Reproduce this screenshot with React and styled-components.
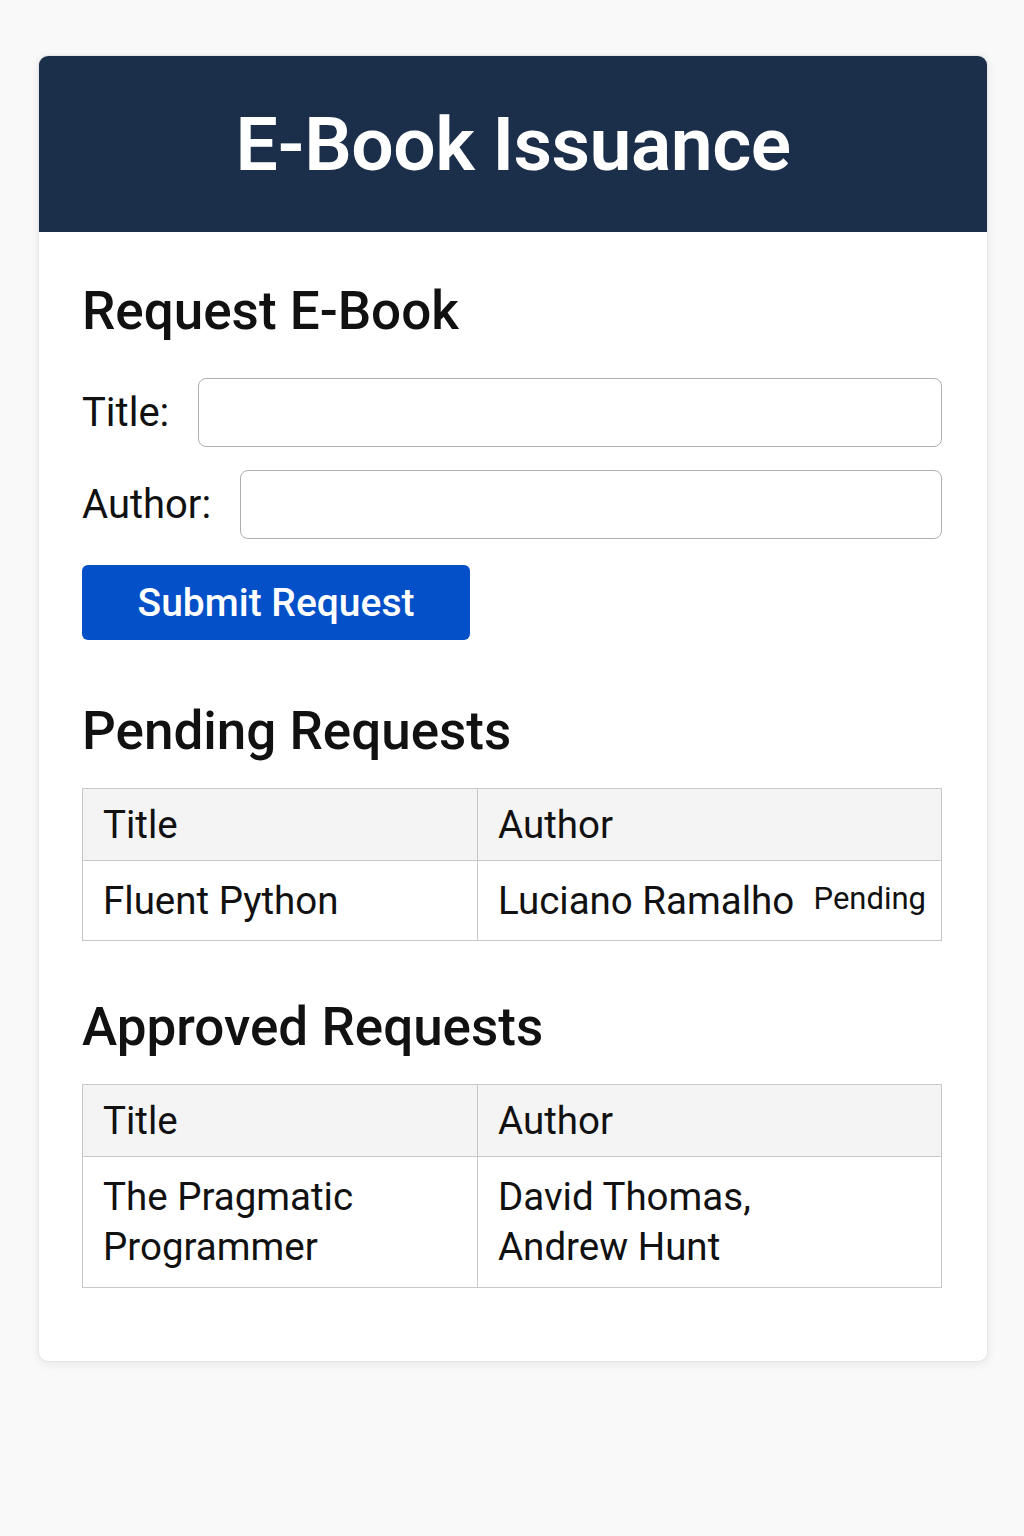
import React from 'react'
import styled, { createGlobalStyle } from 'styled-components'

const GlobalStyle = createGlobalStyle`
    html, body {
        margin: 0;
        padding: 0;
        background: #f9f9f9;
    }
    body {
        font-family: Roboto, "Liberation Sans", sans-serif;
        color: #111;
    }
`

const Page = styled.div`
    padding: 55px 36px 60px 38px;
`

const Card = styled.div`
    width: 950px;
    background: #fff;
    border-radius: 10px;
    overflow: hidden;
    box-shadow: 0 2px 10px rgba(0, 0, 0, 0.08);
    border: 1px solid #e6e6e6;
    box-sizing: border-box;
`

const Header = styled.header`
    height: 176px;
    background: #1b2e4a;
    display: flex;
    align-items: center;
    justify-content: center;
`

const AppTitle = styled.h1`
    margin: 0;
    color: #fff;
    font-size: 75px;
    font-weight: 600;
    letter-spacing: -0.5px;
`

const Body = styled.div`
    padding: 50px 45px 73px 43px;
`

const SectionTitle = styled.h2`
    margin: 0 0 ${(p) => p.$gap || 28}px;
    font-size: 53px;
    font-weight: 500;
    line-height: 58px;
    color: #111;
`

const Form = styled.form`
    display: flex;
    flex-direction: column;
    gap: 23px;
`

const Field = styled.label`
    display: flex;
    align-items: center;
    gap: 29px;
    font-size: 40px;
`

const Input = styled.input`
    flex: 1;
    height: 69px;
    box-sizing: border-box;
    border: 1.5px solid #b0b0b0;
    border-radius: 8px;
    font-size: 30px;
    padding: 0 14px;
    font-family: inherit;
`

const Button = styled.button`
    align-self: flex-start;
    width: 388px;
    height: 75px;
    margin-top: 3px;
    background: #0450c8;
    color: #fff;
    border: none;
    border-radius: 6px;
    font-family: inherit;
    font-size: 39px;
    font-weight: 500;
`

const Section = styled.section`
    margin-top: ${(p) => p.$top}px;
`

const Table = styled.table`
    width: 100%;
    table-layout: fixed;
    border-collapse: collapse;
    font-size: 38.5px;
`

const Th = styled.th`
    box-sizing: border-box;
    text-align: left;
    font-weight: 400;
    background: #f4f4f4;
    border: 1.5px solid #c8c8c8;
    height: 72px;
    padding: 0 20px;
    width: ${(p) => p.$w || 'auto'};
`

const Td = styled.td`
    border: 1.5px solid #c8c8c8;
    padding: ${(p) => (p.$multi ? '15px 20px' : '0 20px')};
    height: ${(p) => (p.$multi ? 'auto' : '79px')};
    line-height: 50px;
    vertical-align: middle;
    white-space: ${(p) => (p.$multi ? 'normal' : 'nowrap')};
`

const AuthorCell = styled.div`
    display: flex;
    align-items: center;
    justify-content: space-between;
`

const Status = styled.span`
    font-size: 31px;
    margin-right: -5px;
    margin-top: -4px;
`

const pending = [{ title: 'Fluent Python', author: 'Luciano Ramalho' }]
const approved = [
    { title: ['The Pragmatic', 'Programmer'], author: ['David Thomas,', 'Andrew Hunt'] },
]

const App = () => {
    return (
        <Page>
            <GlobalStyle />
            <Card>
                <Header>
                    <AppTitle>E-Book Issuance</AppTitle>
                </Header>
                <Body>
                    <SectionTitle $gap={38}>Request E-Book</SectionTitle>
                    <Form onSubmit={(e) => e.preventDefault()}>
                        <Field>
                            Title:
                            <Input type="text" />
                        </Field>
                        <Field>
                            Author:
                            <Input type="text" />
                        </Field>
                        <Button type="submit">Submit Request</Button>
                    </Form>

                    <Section $top={62}>
                        <SectionTitle>Pending Requests</SectionTitle>
                        <Table>
                            <thead>
                                <tr>
                                    <Th $w="395px">Title</Th>
                                    <Th>Author</Th>
                                </tr>
                            </thead>
                            <tbody>
                                {pending.map((r) => (
                                    <tr key={r.title}>
                                        <Td>{r.title}</Td>
                                        <Td>
                                            <AuthorCell>
                                                {r.author}
                                                <Status>Pending</Status>
                                            </AuthorCell>
                                        </Td>
                                    </tr>
                                ))}
                            </tbody>
                        </Table>
                    </Section>

                    <Section $top={57}>
                        <SectionTitle>Approved Requests</SectionTitle>
                        <Table>
                            <thead>
                                <tr>
                                    <Th $w="395px">Title</Th>
                                    <Th>Author</Th>
                                </tr>
                            </thead>
                            <tbody>
                                {approved.map((r) => (
                                    <tr key={r.title[0]}>
                                        <Td $multi>
                                            {r.title[0]}
                                            <br />
                                            {r.title[1]}
                                        </Td>
                                        <Td $multi>
                                            {r.author[0]}
                                            <br />
                                            {r.author[1]}
                                        </Td>
                                    </tr>
                                ))}
                            </tbody>
                        </Table>
                    </Section>
                </Body>
            </Card>
        </Page>
    )
}

export default App
